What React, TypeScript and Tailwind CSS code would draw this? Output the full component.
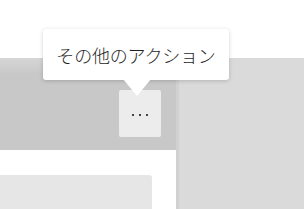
export default function App() {
  return (
    <div className="relative w-[304px] h-[209px] overflow-hidden bg-white font-['Noto_Sans_CJK_JP','Noto_Sans',sans-serif]">
      <div className="h-[58px] bg-white" />
      <div className="flex h-[151px]">
        <div className="w-[176px] flex flex-col bg-[#c8c8c8]">
          <div className="h-[15px] bg-gradient-to-b from-[#d6d6d6] to-[#c9c9c9]" />
          <div className="h-[77px] flex items-start justify-end pt-[17px] pr-[15px]">
            <button className="w-[42px] h-[47px] rounded-[2px] bg-[#ececec] flex items-center justify-center gap-[5px] pt-[3px]">
              <span className="w-[2px] h-[2px] bg-[#444]" />
              <span className="w-[2px] h-[2px] bg-[#444]" />
              <span className="w-[2px] h-[2px] bg-[#444]" />
            </button>
          </div>
          <div className="flex-1 bg-white pt-[25px] pr-[24px]">
            <div className="h-full bg-[#e6e6e6] rounded-tr-[3px]" />
          </div>
        </div>
        <div className="w-[3px] bg-[#d1d1d1]" />
        <div className="flex-1 bg-[#dadada]" />
      </div>

      <div className="absolute left-[43px] top-[29px] w-[186px] h-[51px] rounded-[3px] bg-white shadow-[0_1px_4px_rgba(0,0,0,0.18)] flex items-center justify-center text-[18px] font-light leading-none text-[#1f1f1f] tracking-[-0.2px]">
        その他のアクション
      </div>
      <svg className="absolute left-[123px] top-[79px]" width="28" height="17" viewBox="0 0 28 17">
        <polygon points="0,0 28,0 14,17" fill="#ffffff" />
      </svg>
    </div>
  );
}
